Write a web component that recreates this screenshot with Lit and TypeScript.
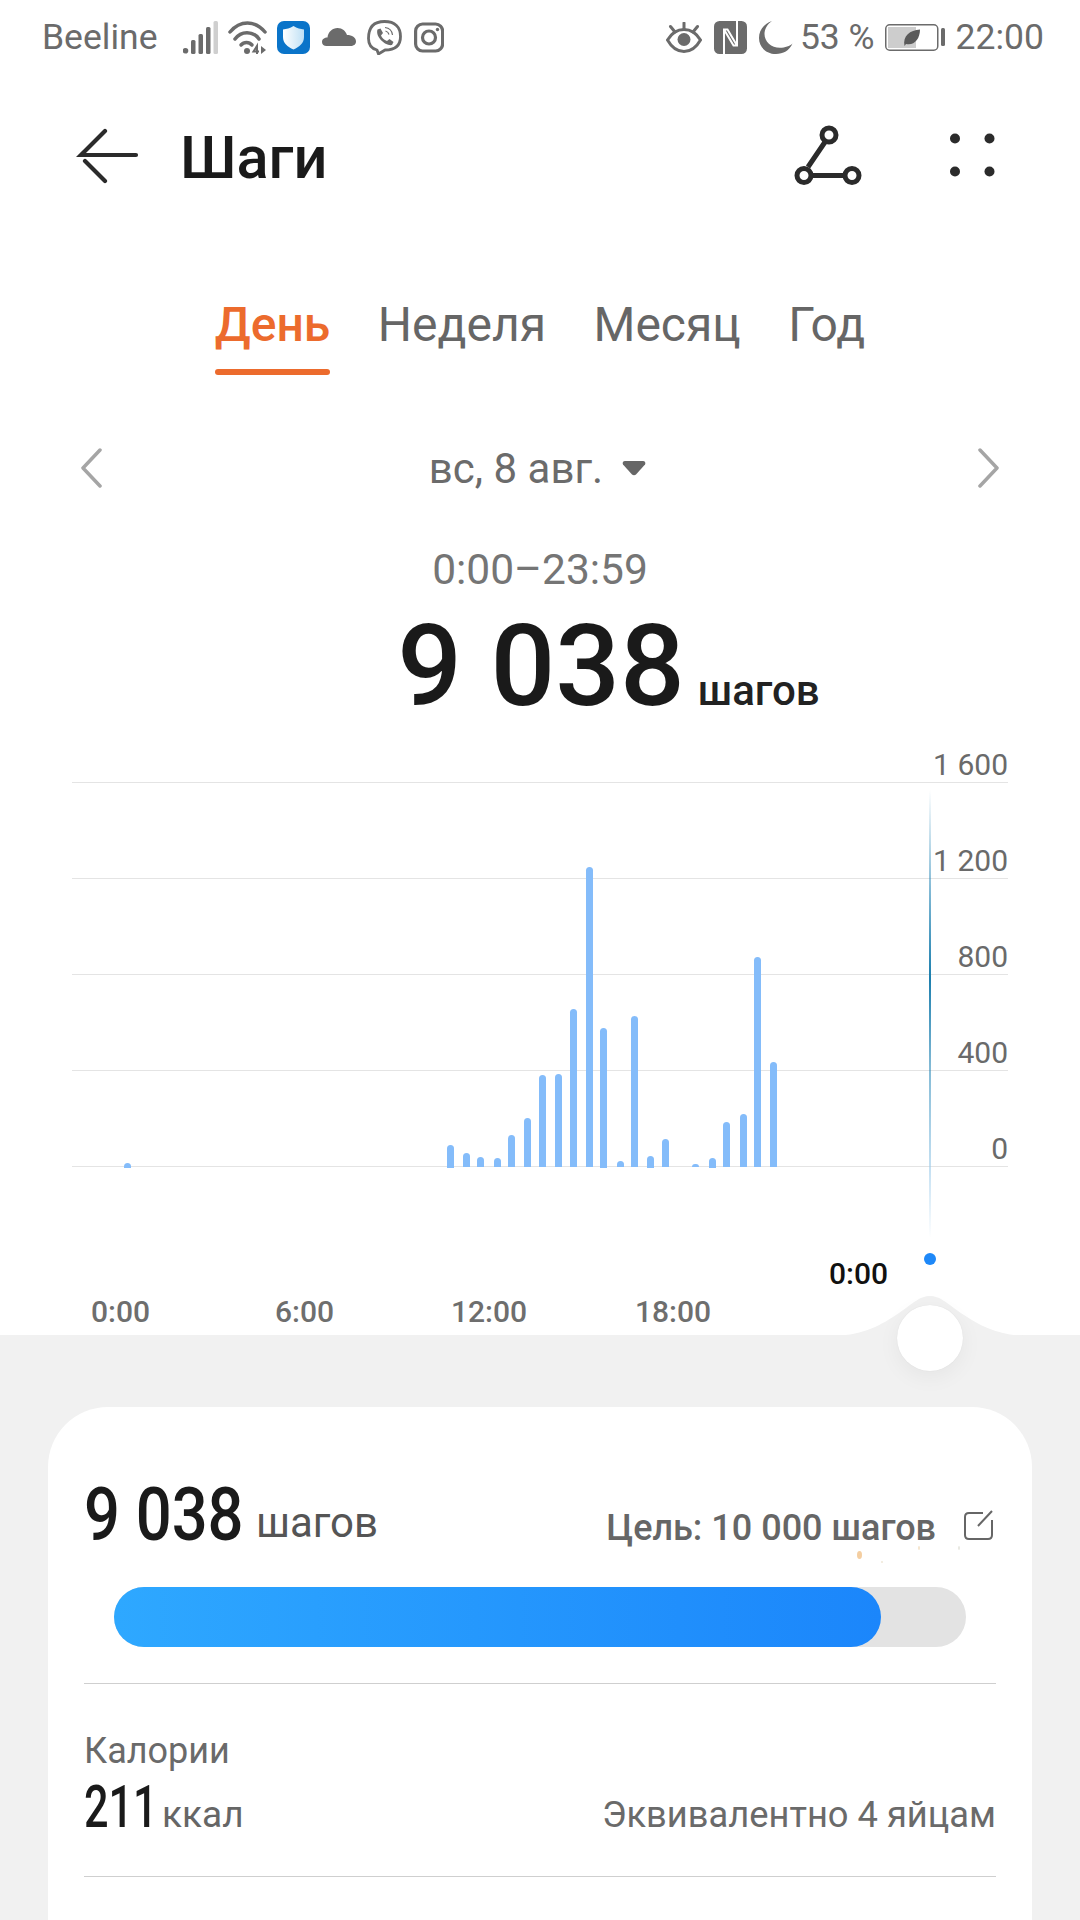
import { LitElement, html, css } from "lit";
import { customElement } from "lit/decorators.js";

const CHART_LEFT = 72;
const CHART_TOP = 687;
const BASE = 1167.5;
const BARS: [number, number][] = [
  [127.4, 1163],[450, 1145],[466.3, 1152.7],[480.7, 1156.7],[497, 1157.7],[511.3, 1135.3],[527.7, 1117.7],
  [542.3, 1075.3],[558.7, 1073.7],[573, 1009.3],[589.3, 866.7],[603.7, 1028],[620, 1161.3],[634.3, 1016.3],
  [650.7, 1156],[665.3, 1138.7],[695.7, 1164.3],[712.3, 1158],[726.7, 1122.3],[743, 1114.3],[757.3, 956.7],[773.7, 1062.3],
];
const GRID = ["1 600", "1 200", "800", "400", "0"];
const XL: [string, number][] = [["0:00", 91], ["6:00", 275], ["12:00", 451], ["18:00", 635]];
const DOTS: [number, number, number, number, string][] = [
  [821, 144, 5, 8, "rgba(240,190,130,.75)"],
  [882, 139, 2, 4, "rgba(240,215,180,.7)"],
  [922, 139, 2, 4, "rgba(225,225,215,.8)"],
  [845, 154, 2, 2, "rgba(235,225,205,.8)"],
];

@customElement("app-root")
export class AppRoot extends LitElement {
  static styles = css`
    :host { display: block; width: 1080px; height: 1920px; overflow: hidden; background: #fff; position: relative;
      font-family: Roboto, "Noto Sans", sans-serif; color: #666; }
    .status { height: 74px; display: flex; align-items: center; justify-content: space-between; padding: 0 36px 0 42px; font-size: 35.5px; color: #6b6b6b; }
    .status .l, .status .r { display: flex; align-items: center; }
    .status svg { display: block; flex: none; }
    .carrier { width: 141px; }
    .m10 { margin-right: 10px; }
    .m11 { margin-right: 11px; }
    .m12 { margin-right: 12px; }
    .pct { margin: 0 10px 0 7px; }
    .time { margin-left: 11px; }
    .header { height: 162px; display: flex; align-items: center; padding-left: 76px; }
    .header svg { display: block; flex: none; }
    .title { font-size: 59.5px; font-weight: 500; color: #1a1a1a; margin: 6px 0 0 38px; }
    .hicons { margin-left: auto; margin-right: 85px; display: flex; align-items: center; gap: 87px; }
    .tabs { display: flex; justify-content: center; gap: 47.5px; height: 140px; padding-top: 58px; box-sizing: border-box; font-size: 48px; color: #666; }
    .tab { display: flex; flex-direction: column; line-height: 62px; height: 82px; }
    .tab.on { color: #ec6b2d; font-weight: 500; }
    .tab.on::after { content: ""; display: block; height: 6px; border-radius: 3px; background: #ec6b2d; margin-top: 13px; }
    .date { height: 90px; display: flex; align-items: center; justify-content: space-between; padding: 0 80px; margin-top: 47px; }
    .date svg { display: block; }
    .date .mid { display: flex; align-items: center; gap: 19px; font-size: 42px; color: #6b6b6b; padding-right: 5px; }
    .range { text-align: center; font-size: 42.5px; color: #757575; line-height: 46px; margin-top: 34px; }
    .total { display: flex; justify-content: center; align-items: baseline; height: 94px; box-sizing: border-box; color: #1a1a1a; padding: 21px 0 0 137px; }
    .total b { font-size: 114px; font-weight: 500; line-height: 104px; }
    .total span { font-size: 42px; font-weight: 500; margin-left: 13px; color: #222; }
    .chart { position: relative; margin: 0 72px; height: 482px; }
    .row { height: 96px; border-bottom: 1.5px solid #e4e4e4; box-sizing: border-box; display: flex; justify-content: flex-end; align-items: flex-end; font-size: 30px; line-height: 34px; color: #6a6a6a; }
    .row:last-child { height: 97px; }
    .bars { position: absolute; inset: 0; }
    .bar { position: absolute; width: 7px; background: #84bcfa; border-radius: 3.5px 3.5px 0 0; }
    .cursor { position: absolute; left: 857px; top: 103px; width: 2px; height: 448px;
      background: linear-gradient(to bottom, rgba(30,130,180,0), rgba(30,130,180,.55) 22%, #1c7fae 42%, rgba(30,130,180,.55) 62%, rgba(160,205,235,.6) 85%, rgba(200,225,245,0)); }
    .dot { position: absolute; left: 852px; top: 566px; width: 12px; height: 12px; border-radius: 50%; background: #1e88f8; }
    .cur-time { position: absolute; left: 757px; top: 569px; font-size: 30px; line-height: 36px; font-weight: 500; color: #111; }
    .xaxis { position: relative; height: 166px; }
    .xl { position: absolute; top: 125px; font-size: 30px; line-height: 36px; font-weight: 500; color: #6e6e6e; }
    .band { position: relative; background: #f1f1f1; height: 585px; padding-top: 72px; box-sizing: border-box; }
    .hump { position: absolute; left: 830px; top: -40px; display: block; }
    .knob { position: absolute; left: 897px; top: -30px; width: 66px; height: 66px; border-radius: 50%; background: #fff; box-shadow: 0 6px 22px rgba(0,0,0,.05), 0 0 1px rgba(0,0,0,.1); }
    .card { margin: 0 48px; background: #fff; border-radius: 60px 60px 0 0; padding: 0 36px; height: 600px; position: relative; }
    .goal { height: 277px; border-bottom: 1.5px solid #cfcfcf; box-sizing: border-box; position: relative; }
    .line { display: flex; align-items: baseline; justify-content: space-between; }
    .num { display: inline-block; font-weight: 500; color: #1a1a1a; white-space: nowrap; transform-origin: 0 50%; }
    .num-big { font-size: 74px; width: 158px; transform: scaleX(.855); line-height: 84px; }
    .num-cal { font-size: 60px; width: 72px; transform: scaleX(.72); line-height: 62px; }
    .unit { font-size: 42px; color: #555; margin-left: 14px; vertical-align: 3px; }
    .l1 { padding-top: 66px; }
    .goalr { display: flex; align-items: center; font-size: 36px; font-weight: 500; color: #666; gap: 27px; }
    .edit { margin: -6px 2px 0 0; }
    .track { position: absolute; left: 30px; right: 30px; top: 180px; height: 60px; border-radius: 30px; background: #e3e3e3; }
    .fill { height: 100%; border-radius: 30px; background: linear-gradient(to right, #2ea8ff, #1b86fb); }
    .cal { height: 193px; border-bottom: 1.5px solid #cfcfcf; box-sizing: border-box; padding-top: 47px; }
    .cal-t { font-size: 36px; line-height: 40px; color: #6a6a6a; margin-bottom: 5px; }
    .eq { font-size: 36.3px; color: #6a6a6a; }
    .unit2 { font-size: 37px; color: #666; margin-left: 6px; }
    .sp { position: absolute; border-radius: 50%; }
  `;

  private statusL() {
    return html`
      <svg class="m10" width="35" height="33" viewBox="0 0 35 33">
        <g fill="#6b6b6b"><circle cx="2.500" cy="29.800" r="2.800"/><rect x="8" y="19" width="4.500" height="14" rx="1.500"/><rect x="15.500" y="13" width="4.500" height="20" rx="1.500"/><rect x="23" y="6" width="4.500" height="27" rx="1.500"/></g>
        <rect x="30.500" y="0" width="4.500" height="33" rx="1.500" fill="#cfcfcf"/>
      </svg>
      <svg class="m10" width="39" height="33" viewBox="0 0 39 33" fill="none" stroke="#6b6b6b" stroke-width="3.500" stroke-linecap="round">
        <path d="M2 11C12 -1 27 -1 37 11"/><path d="M7 18C13 9.500 25 9.500 31 18"/><path d="M13 24C16 20.500 21 20.500 24 24"/>
        <circle cx="19" cy="30" r="3" fill="#6b6b6b" stroke="none"/>
        <path d="M29 33V25L25.500 30.500H31" stroke-width="2" stroke-linecap="butt"/>
        <path d="M33 25V33L38 29Z" fill="#6b6b6b" stroke="none"/>
      </svg>
      <svg class="m12" width="33" height="33" viewBox="0 0 33 33">
        <defs><linearGradient id="sh" x1="0" x2="1"><stop offset="0" stop-color="#fff"/><stop offset="1" stop-color="#bfe0f5"/></linearGradient></defs>
        <rect width="33" height="33" rx="7" fill="#0a74c9"/>
        <path d="M16.500 5C20 7.500 23.500 8 27 8.500V16C27 22 22.500 26 16.500 28.500C10.500 26 6 22 6 16V8.500C9.500 8 13 7.500 16.500 5Z" fill="url(#sh)"/>
      </svg>
      <svg class="m11" width="34" height="18" viewBox="0 0 34 18">
        <path d="M4.500 18C2 18 0 16.500 0 14C0 11 2.500 9.500 5.500 9.500C6 4 10.500 0 15.500 0C20.500 0 23.500 3 25 7C30 7 34 9.500 34 13.500C34 16.500 31.500 18 28.500 18Z" fill="#6b6b6b"/>
      </svg>
      <svg class="m12" width="35" height="35" viewBox="0 0 35 35" fill="none" stroke="#6b6b6b">
        <path d="M10 30C4 28.500 1.500 24.500 1.500 18.500C1.500 7 7 1.500 17.500 1.500C28 1.500 33.500 7 33.500 16.500C33.500 26 28 30 18 30L11.500 34Z" stroke-width="2.800" stroke-linejoin="round"/>
        <path d="M10.500 9.500L13.500 8.500L16 13L14 15.500C15 18 17 20 20 21L22.500 19L26.500 22L25 25C19 26.500 8 17 10.500 9.500Z" fill="#6b6b6b" stroke="none"/>
        <path d="M18 7.500C22.500 8 25 10.500 25.500 15M18.500 11C20.500 11.500 21.500 12.500 22 14.500" stroke-width="1.200"/>
      </svg>
      <svg width="30" height="31" viewBox="0 0 30 31" fill="none" stroke="#6b6b6b" stroke-width="3.200">
        <rect x="1.600" y="2" width="27" height="27" rx="7"/><circle cx="15" cy="15.500" r="6.500"/><circle cx="23.500" cy="7.500" r="1.700" fill="#6b6b6b" stroke="none"/>
      </svg>`;
  }

  private statusR() {
    return html`
      <svg class="m12" width="36" height="31" viewBox="0 0 36 31">
        <path d="M1.500 18C6 10.500 11.500 7.500 18 7.500C24.500 7.500 30 10.500 34.500 18C30 26 24.500 29.500 18 29.500C11.500 29.500 6 26 1.500 18Z" fill="none" stroke="#6b6b6b" stroke-width="3"/>
        <circle cx="18" cy="17.500" r="6.500" fill="#6b6b6b"/>
        <path d="M18 1V7M4.500 4.500L9 10M31.500 4.500L27 10" stroke="#6b6b6b" stroke-width="3" stroke-linecap="round"/>
      </svg>
      <svg class="m12" width="33" height="33" viewBox="0 0 33 33">
        <rect width="33" height="33" rx="5.500" fill="#6b6b6b"/>
        <path d="M10 33V8.500H13.500L23 24.500M23 0V24.500H19.500L10 8.500" fill="none" stroke="#fff" stroke-width="2"/>
      </svg>
      <svg width="34" height="33" viewBox="0 0 34 33">
        <path d="M13 0C5 2.500 0 9.500 0 17C0 26.500 7.500 33 17 33C24 33 30.500 29.500 33.500 22.500C31 25 26 26.800 21 26.800C12 26.800 5.500 20.500 5.500 13C5.500 8 8.500 3 13 0Z" fill="#6b6b6b"/>
      </svg>
      <span class="pct">53 %</span>
      <svg width="60" height="27" viewBox="0 0 60 27">
        <rect x=".75" y=".75" width="52" height="25.500" rx="4" fill="none" stroke="#6b6b6b" stroke-width="1.500"/>
        <rect x="3" y="3" width="28" height="21" fill="#cdcdcd"/>
        <path d="M19.500 22C17.500 12 25 6 35 5.500C35 15 29 22 21 20Z" fill="#5a5a5a"/>
        <rect x="56" y="4" width="4" height="18" rx="1.500" fill="#6b6b6b"/>
      </svg>
      <span class="time">22:00</span>`;
  }

  render() {
    return html`
      <div class="status">
        <div class="l"><span class="carrier">Beeline</span>${this.statusL()}</div>
        <div class="r">${this.statusR()}</div>
      </div>
      <div class="header">
        <svg width="66" height="60" viewBox="0 0 66 60" fill="none" stroke="#2b2b2b" stroke-width="4.200" stroke-linecap="round">
          <path d="M60 30H5L29 6M9 36L29 56"/>
        </svg>
        <span class="title">Шаги</span>
        <div class="hicons">
          <svg width="70" height="60" viewBox="0 0 70 60" fill="none" stroke="#2b2b2b" stroke-width="5">
            <path d="M32 17L15 42M18 50.500H52"/>
            <circle cx="36" cy="10" r="7"/><circle cx="11" cy="50.500" r="7"/><circle cx="59" cy="50.500" r="7"/>
          </svg>
          <svg width="45" height="44" viewBox="0 0 45 44" fill="#2b2b2b">
            <circle cx="5" cy="5.500" r="5"/><circle cx="39.500" cy="5.500" r="5"/><circle cx="5" cy="38.500" r="5"/><circle cx="39.500" cy="38.500" r="5"/>
          </svg>
        </div>
      </div>
      <div class="tabs">
        <div class="tab on">День</div><div class="tab">Неделя</div><div class="tab">Месяц</div><div class="tab">Год</div>
      </div>
      <div class="date">
        <svg width="22" height="40" viewBox="0 0 22 40" fill="none" stroke="#a5a5a5" stroke-width="3.500" stroke-linecap="round" stroke-linejoin="round"><path d="M20 2L3 20L20 38"/></svg>
        <div class="mid">вс, 8 авг.
          <svg width="24" height="16" viewBox="0 0 24 16"><path d="M3 1H21C23 1 24 3 23 4.500L14 14.500C13 15.500 11 15.500 10 14.500L1 4.500C0 3 1 1 3 1Z" fill="#666"/></svg>
        </div>
        <svg width="22" height="40" viewBox="0 0 22 40" fill="none" stroke="#a5a5a5" stroke-width="3.500" stroke-linecap="round" stroke-linejoin="round"><path d="M2 2L19 20L2 38"/></svg>
      </div>
      <div class="range">0:00–23:59</div>
      <div class="total"><b>9 038</b><span>шагов</span></div>
      <div class="chart">
        ${GRID.map((g) => html`<div class="row">${g}</div>`)}
        <div class="bars">
          ${BARS.map(([x, y]) => html`<div class="bar" style="left:${x - 3.5 - CHART_LEFT}px;top:${y - CHART_TOP}px;height:${BASE - y}px"></div>`)}
          <div class="cursor"></div>
          <div class="dot"></div>
          <div class="cur-time">0:00</div>
        </div>
      </div>
      <div class="xaxis">
        ${XL.map(([t, x]) => html`<span class="xl" style="left:${x}px">${t}</span>`)}
      </div>
      <div class="band">
        <svg class="hump" width="200" height="41" viewBox="0 0 200 41"><path d="M0 41C30 41 48 32 66 20C85 7 90 1 100 1C110 1 115 7 134 20C152 32 170 41 200 41Z" fill="#f1f1f1"/></svg>
        <div class="knob"></div>
        <div class="card">
          <div class="goal">
            <div class="line l1">
              <div><span class="num num-big">9 038</span><span class="unit">шагов</span></div>
              <div class="goalr">Цель: 10 000 шагов
                <svg class="edit" width="31" height="31" viewBox="0 0 31 31" fill="none" stroke="#666" stroke-width="2"><path d="M20 3H6C3.500 3 2 4.500 2 7V25C2 27.500 3.500 29 6 29H25C27.500 29 29 27.500 29 25V10"/><path d="M15 16L29 1"/></svg>
              </div>
            </div>
            <div class="track"><div class="fill" style="width:${(767 / 852) * 100}%"></div></div>
            ${DOTS.map(([x, y, w, h, c]) => html`<i class="sp" style="left:${x - 84 + 36}px;top:${y}px;width:${w}px;height:${h}px;background:${c}"></i>`)}
          </div>
          <div class="cal">
            <div class="cal-t">Калории</div>
            <div class="line">
              <div><span class="num num-cal">211</span><span class="unit2">ккал</span></div>
              <div class="eq">Эквивалентно 4 яйцам</div>
            </div>
          </div>
        </div>
      </div>
    `;
  }
}
